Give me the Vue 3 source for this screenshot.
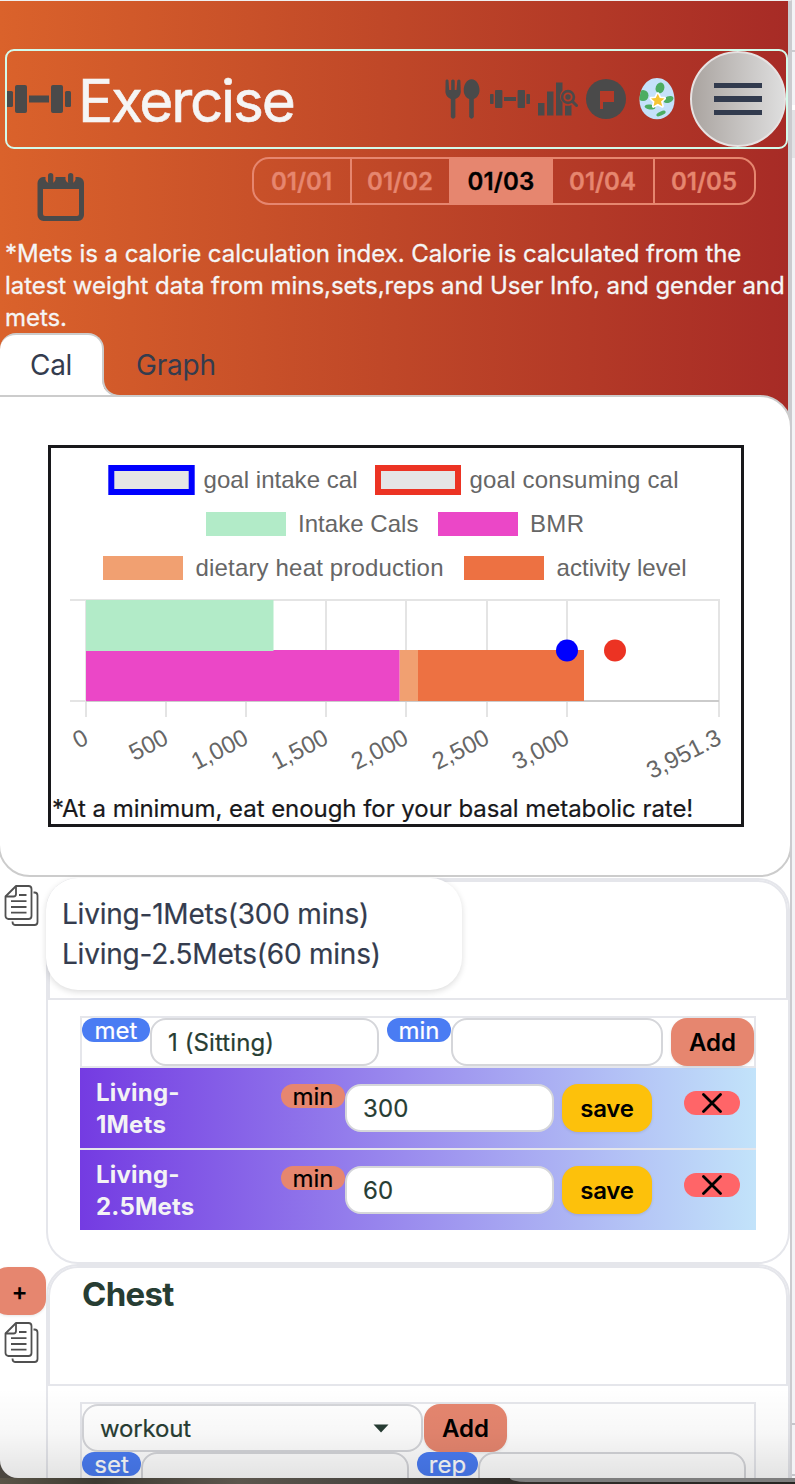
<script setup>
const dates = ['01/01', '01/02', '01/03', '01/04', '01/05']
const activeDate = '01/03'
const workouts = [
  { head: 'Living-', tail: '1Mets', mins: '300' },
  { head: 'Living-', tail: '2.5Mets', mins: '60' },
]
const legend = [
  { x: 103, y: 556, color: '#f1a071', label: 'dietary heat production', tx: 195.5, w: 248 },
  { x: 464, y: 556, color: '#ed7142', label: 'activity level', tx: 556.5, w: 130 },
  { x: 206, y: 512, color: '#b2ebc8', label: 'Intake Cals', tx: 298, w: 120.500 },
  { x: 438, y: 512, color: '#eb47c7', label: 'BMR', tx: 530, w: 54 },
]
const ticks = [
  { x: 86, label: '0' },
  { x: 166, label: '500' },
  { x: 246, label: '1,000' },
  { x: 326, label: '1,500' },
  { x: 406, label: '2,000' },
  { x: 487, label: '2,500' },
  { x: 567, label: '3,000' },
  { x: 719, label: '3,951.3' },
]
</script>

<template>
  <div class="screen">
    <main class="pane">
      <section class="hero">
        <header class="topbar">
          <svg class="logo" viewBox="0 0 64 30" fill="#4a4a4a">
            <rect x="-2" y="7" width="8" height="16" rx="1.5" />
            <rect x="8" y="1" width="12" height="28" rx="2" />
            <rect x="22" y="11.5" width="20" height="7" />
            <rect x="44" y="1" width="12" height="28" rx="2" />
            <rect x="58" y="7" width="6" height="16" rx="1.5" />
          </svg>
          <h1>Exercise</h1>
          <nav class="icons">
            <svg class="i-food" width="36" height="41" viewBox="0 0 36 41" fill="#4a4a4a">
              <path d="M1.5 0.5Q3 0 3.5 1.5L4.2 11H6.2V1.5Q7.9-.5 9.7 1.5V11H11.5L12.3 1.5Q14 -.5 15.4 1.5L15.8 13Q15.5 18 10.4 20V38Q8 41.5 5.8 38V20Q.8 18 .4 13L.6 1.5Z" />
              <path d="M26.6.3C31.5.3 34.5 6 34.5 11C34.5 15.5 32 19 28.8 20V38Q26.5 41.5 24.2 38V20C21 19 18.7 15.5 18.7 11C18.7 6 21.7.3 26.6.3Z" />
            </svg>
            <svg class="i-gym" width="40" height="18" viewBox="0 0 40 18" fill="#4a4a4a">
              <rect x="0" y="4" width="3.6" height="10" rx=".8" />
              <rect x="5" y="0" width="7.4" height="18" rx="1" />
              <rect x="14" y="7" width="12" height="4" />
              <rect x="27.6" y="0" width="7.4" height="18" rx="1" />
              <rect x="36.4" y="4" width="3.6" height="10" rx=".8" />
            </svg>
            <svg class="i-chart" width="40" height="35" viewBox="0 0 40 35" fill="#4a4a4a">
              <path d="M0 21h6.5v12.500H0zM9 9.500h6.500v24H9zM18 .5h6.500v8a8.500 8.500 0 0 0 0 12v13H18zM27 23.500q3 .9 6.500-.5v10.500H27z" />
              <circle cx="30" cy="15" r="5.900" fill="none" stroke="#4a4a4a" stroke-width="2.600" />
              <circle cx="30" cy="15" r="2.700" />
              <path d="M34.500 19.500L38.500 23.500" stroke="#4a4a4a" stroke-width="3" stroke-linecap="round" />
            </svg>
            <svg class="i-flag" width="40" height="40" viewBox="0 0 40 40">
              <circle cx="20" cy="20" r="20" fill="#4a4a4a" />
              <path d="M14 12h14v11H17v7h-3z" fill="#b53a28" />
            </svg>
            <svg class="i-egg" width="44" height="48" viewBox="0 0 44 48">
              <clipPath id="egg-shape"><path d="M22 3C33 3 39.500 14 39.500 25C39.500 36 32 44.300 22 44.300S4.500 36 4.500 25C4.500 14 11 3 22 3Z" /></clipPath>
              <g clip-path="url(#egg-shape)">
                <rect width="44" height="48" fill="#c5e1fa" />
                <g fill="#4cad62">
                  <ellipse cx="25" cy="13" rx="4.300" ry="5.500" transform="rotate(20 25 13)" />
                  <ellipse cx="8" cy="20.500" rx="5.500" ry="5.500" />
                  <ellipse cx="33.500" cy="24.500" rx="5.200" ry="3.200" transform="rotate(-22 33.500 24.500)" />
                  <ellipse cx="15" cy="32" rx="5.400" ry="2.500" transform="rotate(8 15 32)" />
                  <ellipse cx="26" cy="38.500" rx="5" ry="2" transform="rotate(-24 26 38.500)" />
                </g>
              </g>
              <path d="M22.800 18.800l2 4.200 4.700.4-3.500 3.200 1.300 4.600-4.500-2.400-4.300 2.400 1-4.600-3.500-3.200 4.700-.4z" fill="#f5c535" stroke="#fff" stroke-width="3.200" stroke-linejoin="round" paint-order="stroke" />
            </svg>
          </nav>
          <button class="menu" aria-label="Menu">
            <i></i><i></i><i></i>
          </button>
        </header>

        <div class="datebar">
          <svg class="calendar" width="48" height="50" viewBox="0 0 48 50">
            <path fill-rule="evenodd" fill="#4a4a4a" d="M6 5H8.500V7.500A5.200 5.200 0 0 0 18.500 7.500V5H28.500V7.500A5.200 5.200 0 0 0 38.500 7.500V5H41A6 6 0 0 1 47 11V43A6 6 0 0 1 41 49H6.500A6 6 0 0 1 .5 43V11A6 6 0 0 1 6 5ZM6 17V42A2 2 0 0 0 8 44H40A2 2 0 0 0 42 42V17Z" />
            <rect x="11" y="1" width="5.300" height="11" rx="2.650" fill="#4a4a4a" />
            <rect x="31" y="1" width="5.300" height="11" rx="2.650" fill="#4a4a4a" />
          </svg>
          <div class="dates">
            <button v-for="d in dates" :key="d" :class="{ active: d === activeDate }">{{ d }}</button>
          </div>
        </div>

        <p class="info">
          <span class="l1">*Mets is a calorie calculation index. Calorie is calculated from the</span>
          <span class="l2">latest weight data from mins,sets,reps and User Info, and gender and</span>
          <span>mets.</span>
        </p>

        <div class="tabs">
          <div class="tab current">Cal</div>
          <svg class="flare" width="18" height="18" viewBox="0 0 18 18">
            <path d="M0 0C0 10 6 16 16 16H18V18H0Z" fill="#fff" />
            <path d="M1 0C1 9 7 17 18 17" fill="none" stroke="#ccc" stroke-width="2" />
          </svg>
          <div class="tab other">Graph</div>
        </div>
      </section>

      <section class="panel">
        <div class="chartbox">
          <svg class="chart" width="690" height="345" viewBox="51 448 690 345" font-size="24" fill="#666">
            <g fill="#e5e5e5" stroke-width="6">
              <rect x="111.300" y="468" width="80.400" height="24" stroke="#0000fe" />
              <rect x="378" y="468" width="80" height="24" stroke="#ec3323" />
            </g>
            <text x="203.500" y="488" textLength="154">goal intake cal</text>
            <text x="469.500" y="488" textLength="209">goal consuming cal</text>
            <g v-for="l in legend" :key="l.label">
              <rect :x="l.x" :y="l.y" width="80" height="24" :fill="l.color" />
              <text :x="l.tx" :y="l.y + 20" :textLength="l.w">{{ l.label }}</text>
            </g>
            <g stroke="#e4e4e4" stroke-width="2">
              <path d="M70 600H720M70 701H86" />
              <path v-for="t in ticks" :key="t.x" :d="`M${t.x} 600V717`" />
              <path d="M86 701H719" stroke="#cbcbcb" />
            </g>
            <rect x="86" y="650" width="313.700" height="51" fill="#eb47c7" />
            <rect x="86" y="600" width="187.500" height="51" fill="#b2ebc8" />
            <rect x="399.700" y="650" width="18.300" height="51" fill="#f1a071" />
            <rect x="418" y="650" width="166" height="51" fill="#ed7142" />
            <circle cx="567" cy="650.500" r="11" fill="#0000fe" />
            <circle cx="615" cy="650.500" r="11" fill="#ec3323" />
            <text
              v-for="t in ticks" :key="t.label" text-anchor="end"
              :transform="`translate(${t.x + 4} 743) rotate(-27)`"
            >{{ t.label }}</text>
          </svg>
          <p class="note">*At a minimum, eat enough for your basal metabolic rate!</p>
        </div>
      </section>

      <section class="entry">
        <aside class="side first">
          <svg class="copy" width="36" height="42" viewBox="0 0 36 42" fill="none" stroke="#505050" stroke-width="1.800">
            <path d="M12 1H24.500a3 3 0 0 1 3 3V31a3 3 0 0 1-3 3H4.500a3 3 0 0 1-3-3V11.500Z" stroke-linejoin="round" />
            <path d="M12 1V9a2.500 2.500 0 0 1-2.500 2.500H1.500M29.500 7.500h1a3 3 0 0 1 3 3V37a3 3 0 0 1-3 3H11q-2.500 0-2.500-3.500M15 10h7.500M7 16.200h15.500M7 22h15.500M7 27.600h15.500" />
          </svg>
        </aside>
        <div class="card">
          <div class="cardhead"></div>
          <div class="summary">
            <div>Living-1Mets(300 mins)</div>
            <div class="s2">Living-2.5Mets(60 mins)</div>
          </div>
          <div class="table">
            <div class="addrow">
              <span class="tag w68">met</span>
              <div class="field w229">1 (Sitting)</div>
              <span class="tag w64 gap">min</span>
              <div class="field w212"></div>
              <button class="btn add gap">Add</button>
            </div>
            <div v-for="w in workouts" :key="w.tail" class="row">
              <div class="name">{{ w.head }}<br />{{ w.tail }}</div>
              <span class="tag coral w64">min</span>
              <div class="field w209">{{ w.mins }}</div>
              <button class="btn save gap">save</button>
              <button class="remove" aria-label="Remove">
                <svg width="20" height="20" viewBox="0 0 20 20"><path d="M1.500 1.500L18.500 18.500M18.500 1.500L1.500 18.500" stroke="#000" stroke-width="2.800" stroke-linecap="round" /></svg>
              </button>
            </div>
          </div>
        </div>
      </section>

      <section class="entry second">
        <aside class="side">
          <button class="btn plus">+</button>
          <svg class="copy" width="36" height="42" viewBox="0 0 36 42" fill="none" stroke="#505050" stroke-width="1.800">
            <path d="M12 1H24.500a3 3 0 0 1 3 3V31a3 3 0 0 1-3 3H4.500a3 3 0 0 1-3-3V11.500Z" stroke-linejoin="round" />
            <path d="M12 1V9a2.500 2.500 0 0 1-2.500 2.500H1.500M29.500 7.500h1a3 3 0 0 1 3 3V37a3 3 0 0 1-3 3H11q-2.500 0-2.500-3.500M15 10h7.500M7 16.200h15.500M7 22h15.500M7 27.600h15.500" />
          </svg>
        </aside>
        <div class="card tall">
          <div class="cardhead"><h2>Chest</h2></div>
          <div class="table open">
            <div class="line">
              <div class="field select">workout
                <svg width="16" height="9" viewBox="0 0 16 9"><path d="M.5.500h15L8 8.500z" fill="#273d33" /></svg>
              </div>
              <button class="btn add">Add</button>
            </div>
            <div class="line">
              <span class="tag w59">set</span>
              <div class="field w268"></div>
              <span class="tag w61 gap">rep</span>
              <div class="field w268"></div>
            </div>
          </div>
        </div>
      </section>
      <div class="fade"></div>
    </main>
    <div class="edge"><i class="e1"></i><i class="e2"></i><i class="e3"></i><i class="e4"></i></div>
    <footer class="desk"><div></div></footer>
  </div>
</template>

<style>
body { background: #fff; }
</style>

<style scoped>
.screen, .screen * { box-sizing: border-box; }
.screen {
  width: 795px; height: 1484px; overflow: hidden;
  display: grid; grid-template: 1478px 6px / 792px 3px;
  font-family: Inter, "Noto Sans", sans-serif; font-size: 24px; color: #273d33;
  background: #4b4740;
}
button { border: 0; padding: 0; margin: 0; font: inherit; color: #000; }
h1, h2, p { margin: 0; }
.pane {
  position: relative; overflow: hidden; background: #fff;
  border-top: 1px solid #f0f0f0; border-right: 2px solid #cbcbcf;
  border-bottom-left-radius: 18px;
}
.hero {
  height: 420px; width: 790px; border-right: 2px solid #cbcbcf;
  background: linear-gradient(90deg, #da622b, #bf4728 50%, #a72b26);
  padding-top: 48px;
}
.topbar {
  width: 783px; height: 100px; margin-left: 5px; border: 2px solid #d3fbeb; border-radius: 9px;
  display: flex; align-items: center;
}
.logo { width: 64px; height: 30px; flex: none; }
h1 { font-weight: 400; font-size: 58.500px; line-height: 72px; color: #f5f5f5; margin-left: 7px; width: 367px; flex: none; letter-spacing: -2.250px; -webkit-text-stroke: .6px #f5f5f5; margin-top: 4px; }
.icons { display: flex; align-items: center; width: 245px; flex: none; }
.icons svg { flex: none; }
.i-food { margin-left: 0; }
.i-gym { margin-left: 9px; }
.i-chart { margin-left: 8px; }
.i-flag { margin-left: 8px; }
.i-egg { margin-left: 9px; }
.menu {
  width: 96px; height: 96px; flex: none; border-radius: 50%; border: 2px solid #e6e2e2;
  background: linear-gradient(90deg, #aaa4a0, #dedede);
  display: flex; flex-direction: column; align-items: center; justify-content: center; gap: 8px;
}
.menu i { width: 48px; height: 5.500px; background: #323b4e; }
.datebar { height: 89px; display: flex; align-items: flex-start; }
.calendar { margin: 23px 0 0 37px; flex: none; }
.dates {
  margin: 8px 0 0 167px; width: 504px; height: 48px; display: grid;
  grid-template-columns: 98px 99px 102px 102px 99px;
  border: 2px solid #e6866f; border-radius: 17px; overflow: hidden;
}
.dates button { background: none; color: #e6866f; font-weight: 600; font-size: 24px; border-right: 2px solid #e6866f; padding-right: 1px; -webkit-text-stroke: .3px; }
.dates button:last-child { border-right: 0; }
.dates .active { background: #e6866f; color: #000; letter-spacing: .2px; padding-left: 1px; }
.info { height: 95px; padding-left: 5px; line-height: 32px; color: #f5f5f5; white-space: nowrap; letter-spacing: -.050px; -webkit-text-stroke: .3px #f5f5f5; }
.info span { display: block; }
.tabs { display: flex; height: 64px; font-size: 28px; color: #343c4e; position: relative; align-items: flex-start; }
.tab.current { width: 104px; height: 64px; background: #fff; border: 2px solid #ccc; border-left: 0; border-bottom: 0; border-radius: 16px 16px 0 0; padding-left: 30px; line-height: 61px; letter-spacing: -.3px; }
.tab.other { line-height: 65px; padding-left: 16px; letter-spacing: -.2px; }
.flare { margin: 46px 0 0 -2px; flex: none; }
.panel {
  position: relative; margin: -26px -2px 0; width: 794px; height: 482px; background: #fff;
  border: 2px solid #ccc; border-radius: 0 32px 32px 32px; padding: 48px 0 0 48px;
}
.chartbox { width: 696px; height: 382px; border: 3px solid #18181b; }
.chart { display: block; font-family: "Liberation Sans", Arial, sans-serif; }
.note { color: #18181b; line-height: 32px; white-space: nowrap; padding-left: 1px; letter-spacing: -.050px; -webkit-text-stroke: .2px; }
.entry { display: flex; width: 790px; margin-top: 1px; }
.side { width: 46px; flex: none; }
.side .copy { display: block; margin-left: 4px; }
.side.first { padding-top: 7px; }
.card { width: 744px; height: 386px; border: 2px solid #e5e6eb; border-radius: 32px; position: relative; }
.cardhead { height: 120px; border: 2px solid #e5e6eb; border-radius: 30px 30px 0 0; }
.summary {
  position: absolute; left: -2px; top: -2px; width: 416px; height: 112px; padding: 16px 16px;
  font-size: 28px; line-height: 40px; color: #343c4e; background: #fff; border-radius: 32px; white-space: nowrap;
  box-shadow: 0 2px 6px rgba(0, 0, 0, .14); letter-spacing: -.220px; -webkit-text-stroke: .2px;
}
.table { margin: 16px 0 0 32px; width: 676px; }
.addrow { border: 2px solid #e5e6eb; display: flex; align-items: flex-start; height: 52px; }
.tag { height: 24px; border-radius: 12px; background: #4a7cf3; color: #fff; line-height: 25px; text-align: center; flex: none; -webkit-text-stroke: .2px; }
.tag.coral { background: #e6866f; color: #000; }
.field { height: 48px; border: 2px solid #d5d6da; border-radius: 16px; background: #fff; padding-left: 16px; line-height: 45px; flex: none; color: #273d33; -webkit-text-stroke: .2px; letter-spacing: .1px; }
.gap { margin-left: 8px; }
.w59 { width: 59px; } .w61 { width: 61px; } .w64 { width: 64px; } .w68 { width: 68px; }
.w209 { width: 209px; } .w212 { width: 212px; } .w229 { width: 229px; } .w268 { width: 268px; }
.btn { height: 48px; border-radius: 16px; font-weight: 600; flex: none; box-shadow: 0 1px 3px rgba(0, 0, 0, .1); background: #e6866f; }
.btn.add { width: 83px; }
.btn.save { width: 90px; background: #fdc10b; letter-spacing: -.2px; }
.row {
  height: 80px; display: flex; align-items: flex-start; padding-top: 16px;
  background: linear-gradient(90deg, #743be2, #9a8bee 48%, #c2e3fa);
}
.row + .row { margin-top: 2px; border-top: 0; }
.row:nth-child(2) { box-shadow: 0 2px #e5e6eb; }
.row .name { width: 201px; padding-left: 16px; margin-top: -7px; font-weight: 700; line-height: 32px; color: #f3f3f5; letter-spacing: .2px; }
.remove { width: 56px; height: 24px; border-radius: 12px; background: #ff6568; margin: 7px 0 0 32px; display: flex; align-items: center; justify-content: center; }
.second { margin-top: 0; }
.second .side { padding-top: 3px; }
.plus { width: 54px; margin-left: -8px; padding-left: 1px; display: block; margin-bottom: 7px; }
h2 { font-size: 33px; line-height: 40px; font-weight: 700; padding: 6px 0 0 32px; letter-spacing: -.7px; }
.card.tall { height: 400px; }
.table.open { border: 2px solid #e5e6eb; height: 260px; }
.line { display: flex; align-items: flex-start; }
.select { width: 341px; margin-right: 1px; display: flex; justify-content: space-between; align-items: center; padding-right: 32px; letter-spacing: -.150px; }
.fade { position: absolute; left: 0; right: 0; bottom: 0; height: 90px; background: linear-gradient(rgba(0, 0, 0, 0), rgba(0, 0, 0, .03) 50%, rgba(0, 0, 0, .11)); }
.edge { background: #f3f3f6; display: flex; flex-direction: column; }
.e1 { height: 50px; border-bottom: 2px solid #ccccd0; box-sizing: content-box; }
.e2 { height: 58px; border-bottom: 5px solid #fff; border-top: 0; }
.e3 { height: 48px; background: #e2e2e5; }
.e4 { margin-top: 1265px; height: 53px; border: 2px solid #c5c5ca; border-width: 2px 0; }
.desk { grid-column: 1 / 3; background: linear-gradient(90deg, #5a5548, #3e3a31 12%, #5c564d 30%, #47443f 48%, #332f2b 64%, #262522); }
.desk div { margin-left: 510px; height: 4px; background: #7e7e7e; border-bottom-left-radius: 16px 4px; }
</style>
